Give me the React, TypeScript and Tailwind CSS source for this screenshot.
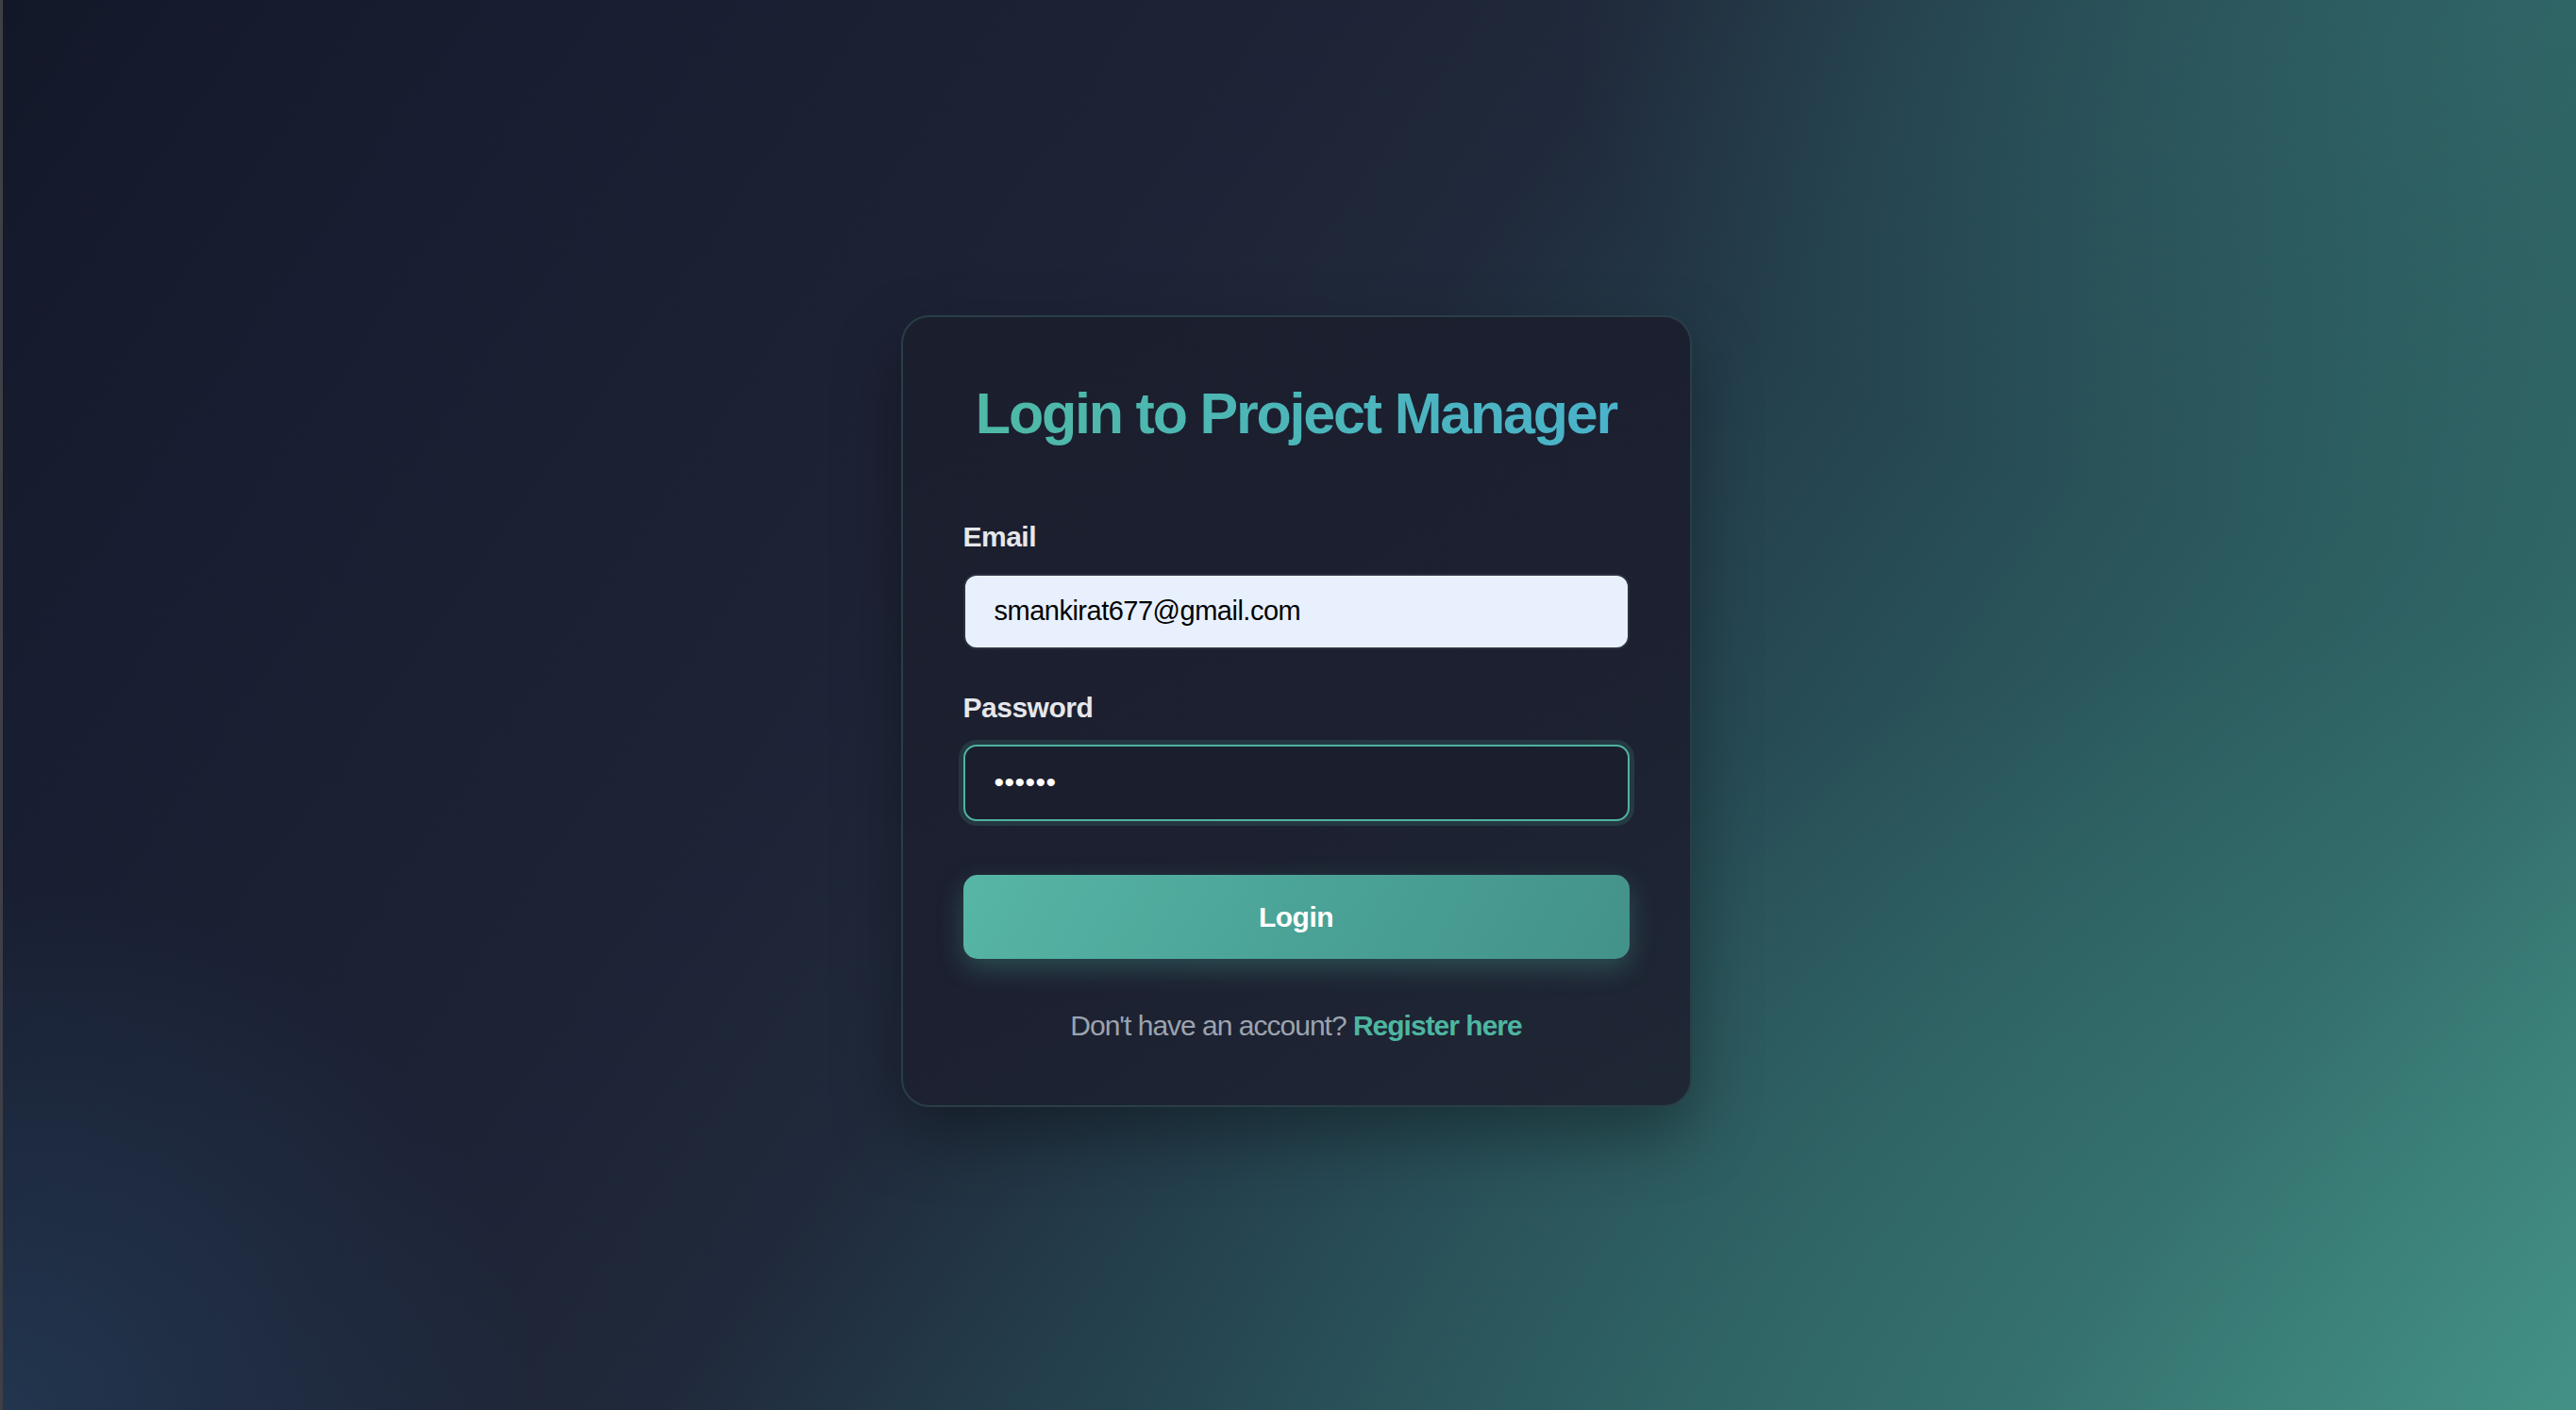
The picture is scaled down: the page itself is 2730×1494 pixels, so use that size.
export default function App() {
  return (
    <div className="flex min-h-screen w-full items-center justify-center border-l-[3px] border-[#3f3f46] pt-[12px] pl-[14px] bg-[radial-gradient(ellipse_at_100%_100%,rgba(70,150,138,0.35)_0%,rgba(70,150,138,0)_40%),radial-gradient(ellipse_at_100%_0%,rgba(52,112,110,0.55)_0%,rgba(52,112,110,0)_28%),radial-gradient(circle_at_0%_100%,rgba(40,74,104,0.5)_0%,rgba(40,74,104,0)_18%),linear-gradient(125deg,#131829_0%,#181e31_15%,#1d2235_34%,#20293b_46%,#243e4c_56%,#274b55_64%,#2c5c5f_75%,#306767_84%,#3a7d77_93%,#428f84_100%)] font-['Liberation_Sans',Arial,sans-serif]">
      <div className="w-[838px] rounded-[30px] border-2 border-[#2a3e47] bg-[linear-gradient(150deg,#1b1e2d_0%,#1c2030_55%,#1f2735_100%)] px-[64px] pt-[66px] pb-[66px] shadow-[0_30px_70px_rgba(0,0,0,0.35)]">
        <h1 className="bg-[linear-gradient(90deg,#4fb9a5,#4ab2cb)] bg-clip-text text-center text-[61px] leading-[72px] font-bold tracking-[-2.2px] text-transparent">
          Login to Project Manager
        </h1>

        <form onSubmit={(e) => e.preventDefault()}>
          <label className="mt-[77px] block text-[30px] leading-[36px] font-bold tracking-[-0.5px] text-[#e5e7eb]">
            Email
          </label>
          <input
            type="email"
            readOnly
            value="smankirat677@gmail.com"
            className="mt-[21px] block h-[80px] w-full rounded-[14px] border-2 border-[#2b3142] bg-[#e8f0fe] px-[31px] text-[29px] tracking-[-0.5px] text-black outline-none"
          />

          <label className="mt-[44px] block text-[30px] leading-[36px] font-bold tracking-[-0.5px] text-[#e5e7eb]">
            Password
          </label>
          <input
            type="text"
            readOnly
            value="••••••"
            className="mt-[21px] block h-[81px] w-full rounded-[14px] border-[2.5px] border-[#4fb3a0] bg-[#1b1e2c] px-[31px] text-[30px] tracking-[0.5px] text-white shadow-[0_0_0_5px_rgba(79,179,160,0.16)] outline-none"
          />

          <button
            type="submit"
            className="mt-[57px] block h-[89px] w-full rounded-[15px] bg-[linear-gradient(120deg,#57b6a6_0%,#4ba397_50%,#43928a_100%)] text-[30px] font-bold tracking-[-0.5px] text-white shadow-[0_10px_28px_rgba(79,179,160,0.3)]"
          >
            Login
          </button>
        </form>

        <p className="mt-[53px] text-center text-[30px] leading-[36px] tracking-[-1px] text-[#9ca3af]">
          Don&apos;t have an account?{" "}
          <a href="#" className="font-bold text-[#4db6a0]">
            Register here
          </a>
        </p>
      </div>
    </div>
  );
}
